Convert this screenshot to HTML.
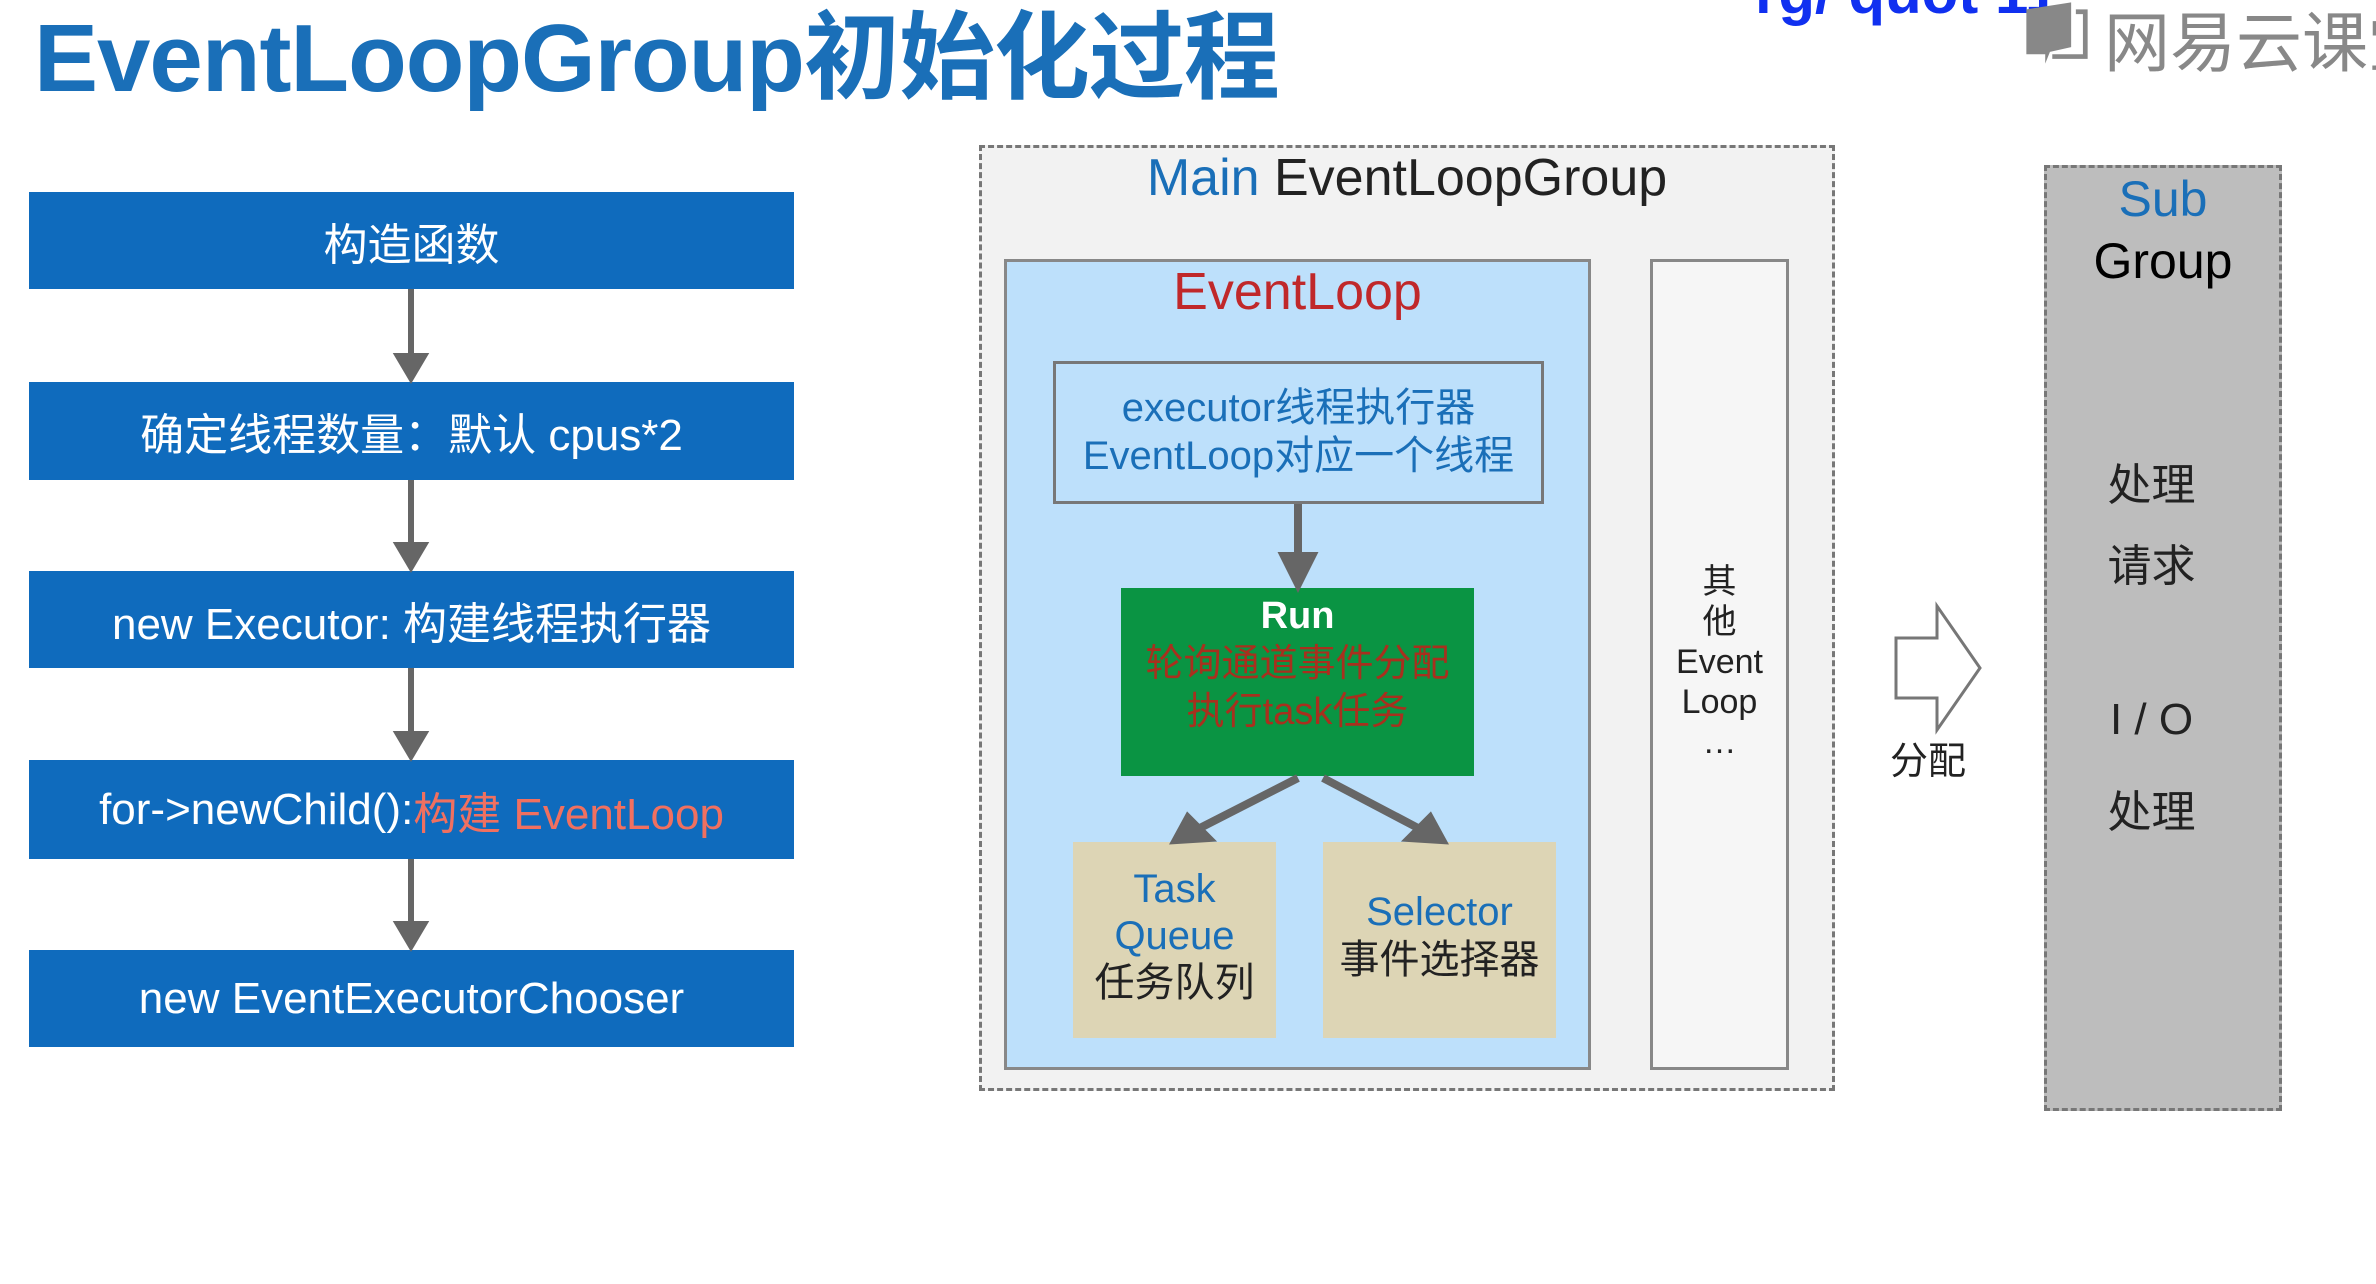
<!DOCTYPE html>
<html><head><meta charset="utf-8"><style>
*{margin:0;padding:0;box-sizing:border-box}
body{width:2376px;height:1284px;background:#fff;position:relative;overflow:hidden;font-family:"Liberation Sans","Noto Sans CJK SC",sans-serif}
.a{position:absolute}
.t{text-align:center;white-space:nowrap}
.lb{position:absolute;left:29px;width:765px;background:#0f6bbd;color:#fff;font-size:44px;display:flex;align-items:center;justify-content:center}
.st{position:absolute;left:2044px;width:215px;text-align:center;font-size:44px;color:#222}
</style></head><body>
<div class="a" style="left:34px;top:-20px;font-size:96px;font-weight:bold;color:#1a6fb8;letter-spacing:-1px">EventLoopGroup初始化过程</div>
<div class="a" style="left:1755px;top:-42px;font-size:60px;font-weight:bold;color:#1030f0">rg/ quot 11</div>
<svg class="a" style="left:2022px;top:0px" width="70" height="66" viewBox="0 0 56 56"><path d="M2 8 L40 2 L40 40 L22 44 L18 54 L18 46 L2 46Z" fill="#888"/><path d="M44 10 L52 10 L52 48 L24 48" fill="none" stroke="#888" stroke-width="4"/></svg>
<div class="a" style="left:2104px;top:-10px;font-size:66px;color:#888;white-space:nowrap">网易云课堂</div>

<div class="lb" style="top:192px;height:97px">构造函数</div>
<div class="lb" style="top:382px;height:98px">确定线程数量：默认 cpus*2</div>
<div class="lb" style="top:571px;height:97px">new Executor: 构建线程执行器</div>
<div class="lb" style="top:760px;height:99px">for->newChild():<span style="color:#f07060">构建 EventLoop</span></div>
<div class="lb" style="top:950px;height:97px">new EventExecutorChooser</div>
<svg class="a" style="left:0;top:0" width="2376" height="1284">
<g stroke="#666" stroke-width="6" fill="#666">
<line x1="411" y1="289" x2="411" y2="360"/><path d="M398 356 L424 356 L411 378Z"/>
<line x1="411" y1="480" x2="411" y2="549"/><path d="M398 545 L424 545 L411 567Z"/>
<line x1="411" y1="668" x2="411" y2="738"/><path d="M398 734 L424 734 L411 756Z"/>
<line x1="411" y1="859" x2="411" y2="928"/><path d="M398 924 L424 924 L411 946Z"/>
</g></svg>

<div class="a" style="left:979px;top:145px;width:856px;height:946px;background:#f2f2f2;border:3px dashed #777"></div>
<div class="a t" style="left:979px;top:148px;width:856px;font-size:52px;color:#222"><span style="color:#1a6fb8">Main</span> EventLoopGroup</div>
<div class="a" style="left:1004px;top:259px;width:587px;height:811px;background:#bde0fb;border:3px solid #888"></div>
<div class="a t" style="left:1004px;top:262px;width:587px;font-size:52px;color:#c0282a">EventLoop</div>
<div class="a t" style="left:1053px;top:361px;width:491px;height:143px;border:3px solid #777;color:#1a6fb8;font-size:40px;line-height:48px;padding-top:20px">executor线程执行器<br>EventLoop对应一个线程</div>
<div class="a t" style="left:1121px;top:588px;width:353px;height:188px;background:#0a9443;font-size:38px;line-height:48px;padding-top:4px;color:#a8301e"><b style="color:#fff">Run</b><br>轮询通道事件分配<br>执行task任务</div>
<div class="a t" style="left:1073px;top:842px;width:203px;height:196px;background:#ddd5b5;font-size:40px;line-height:47px;padding-top:24px;color:#222"><span style="color:#1a6fb8">Task<br>Queue</span><br>任务队列</div>
<div class="a t" style="left:1323px;top:842px;width:233px;height:196px;background:#ddd5b5;font-size:40px;line-height:48px;padding-top:46px;color:#222"><span style="color:#1a6fb8">Selector</span><br>事件选择器</div>
<div class="a t" style="left:1650px;top:259px;width:139px;height:811px;background:#f6f6f6;border:3px solid #888;font-size:34px;line-height:40px;padding-top:300px;color:#222">其<br>他<br>Event<br>Loop<br>…</div>
<svg class="a" style="left:0;top:0" width="2376" height="1284">
<g stroke="#666" stroke-width="8" fill="#666">
<line x1="1298" y1="504" x2="1298" y2="560"/><path d="M1284 556 L1312 556 L1298 584Z"/>
<line x1="1298" y1="778" x2="1200" y2="828"/><path d="M1176 840 L1188 818 L1208 838Z"/>
<line x1="1323" y1="778" x2="1418" y2="828"/><path d="M1442 840 L1430 818 L1410 838Z"/>
</g>
<path d="M1896 638 L1937 638 L1937 606 L1980 668 L1937 730 L1937 698 L1896 698Z" fill="#fff" stroke="#777" stroke-width="3"/>
</svg>
<div class="a" style="left:1890px;top:730px;font-size:38px;color:#222">分配</div>

<div class="a" style="left:2044px;top:165px;width:238px;height:946px;background:#bdbdbd;border:3px dashed #777"></div>
<div class="a t" style="left:2044px;top:168px;width:238px;font-size:50px;line-height:62px"><span style="color:#1a6fb8">Sub</span><br>Group</div>
<div class="st" style="top:449px">处理</div>
<div class="st" style="top:530px">请求</div>
<div class="st" style="top:695px">I / O</div>
<div class="st" style="top:776px">处理</div>
</body></html>
